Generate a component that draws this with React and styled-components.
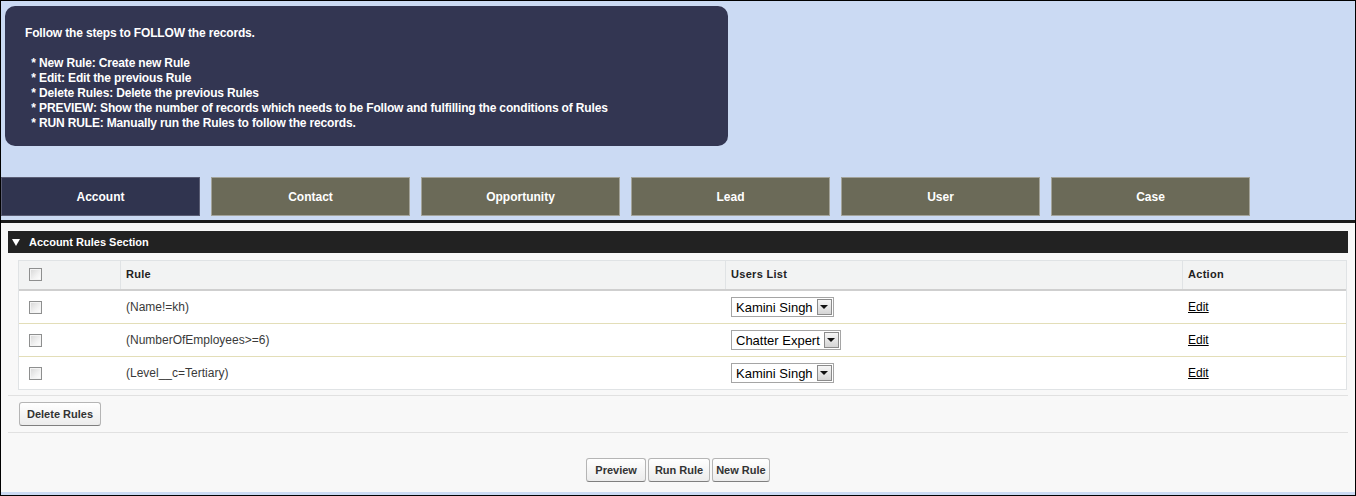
import styled, { createGlobalStyle } from 'styled-components';

const GlobalStyle = createGlobalStyle`
    html, body {
        margin: 0;
        padding: 0;
    }
    body {
        font-family: "Liberation Sans", Arial, sans-serif;
    }
`;

const Frame = styled.div`
    width: 1356px;
    height: 496px;
    box-sizing: border-box;
    border: 1px solid #000;
    background: #cbdaf3;
    display: flex;
    flex-direction: column;
    overflow: hidden;
`;
const Top = styled.div`
    padding: 5px 0 4px 0;
`;
const InfoBox = styled.div`
    margin-left: 4px;
    width: 723px;
    height: 140px;
    box-sizing: border-box;
    padding: 20px 20px 15px 20px;
    background: #333652;
    border-radius: 10px;
    color: #fff;
    font-size: 12px;
    font-weight: bold;
    line-height: 15px;
    letter-spacing: -0.16px;
    white-space: pre;
`;
const Tabs = styled.div`
    display: flex;
    gap: 11px;
    margin-top: 31px;
`;
const Tab = styled.div`
    width: 199px;
    height: 39px;
    box-sizing: border-box;
    border: 1px solid ${p => p.$active ? '#5a5d74' : '#a3a39a'};
    background: ${p => p.$active ? '#30344f' : '#6b6a58'};
    color: #fff;
    font-size: 12px;
    font-weight: bold;
    display: flex;
    align-items: center;
    justify-content: center;
`;
const Panel = styled.div`
    flex: 1;
    margin-bottom: 3px;
    border-top: 3px solid #1c1c1c;
    background: #f8f8f8;
    padding: 8px 7px 0 7px;
    display: flex;
    flex-direction: column;
`;
const SectionHeader = styled.div`
    height: 22px;
    background: #222;
    color: #fff;
    font-size: 11px;
    font-weight: bold;
    display: flex;
    align-items: center;
    padding-left: 4px;
    gap: 9px;
`;
const Triangle = styled.span`
    width: 0;
    height: 0;
    border-left: 4px solid transparent;
    border-right: 4px solid transparent;
    border-top: 7px solid #fff;
`;
const Body = styled.div`
    padding: 7px 1px 0 10px;
`;
const Table = styled.div`
    border: 1px solid #e0e3e5;
    background: #fff;
`;
const Row = styled.div`
    display: grid;
    grid-template-columns: 102px 605px 457px 1fr;
    height: ${p => p.$head ? '28px' : '32px'};
    background: ${p => p.$head ? '#f2f3f3' : '#fff'};
    border-bottom: ${p => p.$head ? '2px solid #cfcfcf' : p.$last ? 'none' : '1px solid #e3deb8'};
    box-sizing: content-box;
`;
const Cell = styled.div`
    display: flex;
    align-items: center;
    padding-left: ${p => p.$check ? '10px' : '5px'};
    border-left: ${p => p.$head && !p.$first ? '1px solid #e0e3e5' : 'none'};
    margin-left: ${p => p.$head && !p.$first ? '-1px' : '0'};
    font-size: ${p => p.$head ? '11px' : '12px'};
    font-weight: ${p => p.$head ? 'bold' : 'normal'};
    letter-spacing: ${p => p.$head ? '0.3px' : '0'};
    color: ${p => p.$head ? '#222' : '#3a3a3a'};
    padding-bottom: ${p => p.$head ? '2px' : '0'};
`;
const Check = styled.span`
    width: 13px;
    height: 13px;
    box-sizing: border-box;
    border: 1px solid #8e8f8f;
    background: linear-gradient(135deg, #d6d6d6 0%, #f2f2f2 60%, #ffffff 100%);
    box-shadow: inset 0 0 0 1px #f4f4f4;
`;
const Select = styled.div`
    display: inline-flex;
    align-items: center;
    height: 20px;
    box-sizing: border-box;
    border: 1px solid #a5a5a5;
    background: #fff;
    padding: 0 1px 0 4px;
    gap: 4px;
    font-size: 13px;
    color: #000;
`;
const Arrow = styled.span`
    width: 15px;
    height: 16px;
    box-sizing: border-box;
    border: 1px solid #8b8b8b;
    background: linear-gradient(#f6f6f6, #d5d5d5);
    display: flex;
    align-items: center;
    justify-content: center;
    &::after {
        content: '';
        border-left: 4px solid transparent;
        border-right: 4px solid transparent;
        border-top: 4px solid #111;
    }
`;
const EditLink = styled.a`
    color: #000;
    text-decoration: underline;
    font-size: 12px;
    cursor: pointer;
`;
const ButtonBar = styled.div`
    margin-top: 5px;
    border-top: 1px solid #e1e1e1;
    border-bottom: 1px solid #e1e1e1;
    padding: 6px 0 6px 11px;
    display: flex;
`;
const Button = styled.button`
    font-family: "Liberation Sans", Arial, sans-serif;
    font-size: 11px;
    font-weight: bold;
    color: #333;
    height: 24px;
    padding: 0 ${p => p.$pad || 7}px;
    border: 1px solid #b5b5b5;
    border-bottom-color: #7f7f7f;
    border-radius: 3px;
    background: linear-gradient(#ffffff, #ececec);
    cursor: pointer;
`;
const BottomButtons = styled.div`
    margin-top: 25px;
    display: flex;
    justify-content: center;
    gap: 2px;
`;

const tabs = ['Account', 'Contact', 'Opportunity', 'Lead', 'User', 'Case'];
const rules = [
    { rule: '(Name!=kh)', user: 'Kamini Singh' },
    { rule: '(NumberOfEmployees>=6)', user: 'Chatter Expert' },
    { rule: '(Level__c=Tertiary)', user: 'Kamini Singh' },
];

const info = `Follow the steps to FOLLOW the records.

  * New Rule: Create new Rule
  * Edit: Edit the previous Rule
  * Delete Rules: Delete the previous Rules
  * PREVIEW: Show the number of records which needs to be Follow and fulfilling the conditions of Rules
  * RUN RULE: Manually run the Rules to follow the records.`;

const App = () => {
    return (
        <Frame>
            <GlobalStyle/>
            <Top>
                <InfoBox>{info}</InfoBox>
                <Tabs>
                    {tabs.map((t, i) => (
                        <Tab key={t} $active={i === 0}>{t}</Tab>
                    ))}
                </Tabs>
            </Top>
            <Panel>
                <SectionHeader><Triangle/>Account Rules Section</SectionHeader>
                <Body>
                    <Table>
                        <Row $head>
                            <Cell $head $first $check><Check/></Cell>
                            <Cell $head>Rule</Cell>
                            <Cell $head>Users List</Cell>
                            <Cell $head>Action</Cell>
                        </Row>
                        {rules.map((r, i) => (
                            <Row key={i} $last={i === rules.length - 1}>
                                <Cell $check><Check/></Cell>
                                <Cell>{r.rule}</Cell>
                                <Cell><Select>{r.user}<Arrow/></Select></Cell>
                                <Cell><EditLink>Edit</EditLink></Cell>
                            </Row>
                        ))}
                    </Table>
                </Body>
                <ButtonBar>
                    <Button>Delete Rules</Button>
                </ButtonBar>
                <BottomButtons>
                    <Button $pad={8}>Preview</Button>
                    <Button $pad={6}>Run Rule</Button>
                    <Button $pad={3}>New Rule</Button>
                </BottomButtons>
            </Panel>
        </Frame>
    )
}

export default App
